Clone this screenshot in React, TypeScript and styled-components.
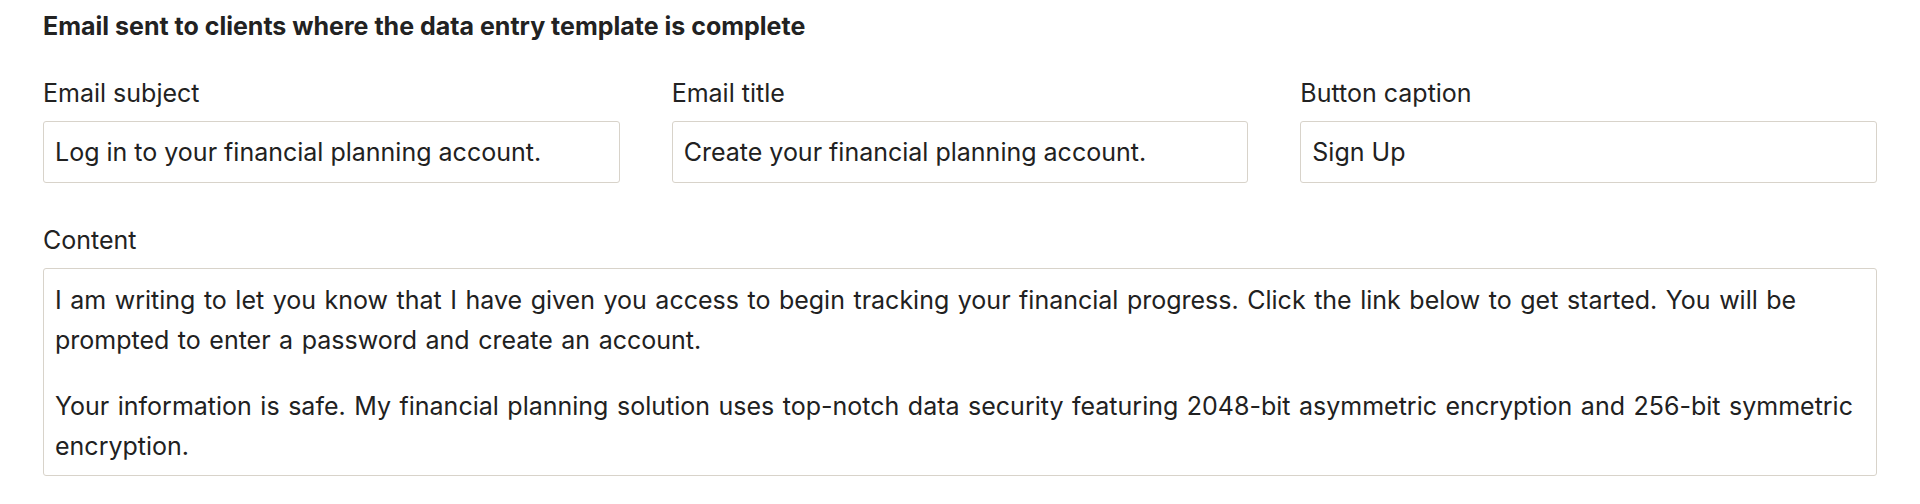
import React from 'react';
import styled, { createGlobalStyle } from 'styled-components';

const GlobalStyle = createGlobalStyle`
  html, body {
    margin: 0;
    padding: 0;
    background: #ffffff;
  }
  body {
    font-family: Inter, "Noto Sans", sans-serif;
    color: #212121;
  }
`;

const Page = styled.div`
  padding: 10px 43px 0 43px;
`;

const Heading = styled.h2`
  margin: 0 0 35px 0;
  font-size: 25px;
  line-height: 32px;
  font-weight: 700;
  color: #222222;
`;

const FieldRow = styled.div`
  display: grid;
  grid-template-columns: repeat(3, 1fr);
  column-gap: 52px;
  margin-bottom: 41px;
`;

const Field = styled.div`
  display: flex;
  flex-direction: column;
  gap: 12px;
`;

const Label = styled.label`
  font-size: 25px;
  line-height: 32px;
  font-weight: 400;
  color: #222222;
`;

const TextInput = styled.input`
  box-sizing: border-box;
  height: 62px;
  width: 100%;
  padding: 0 11px;
  border: 1px solid #d8d3ca;
  border-radius: 3px;
  font-family: inherit;
  font-size: 25px;
  color: #212121;
  background: #ffffff;
  outline: none;
`;

const ContentBox = styled.div`
  box-sizing: border-box;
  border: 1px solid #d8d3ca;
  border-radius: 3px;
  padding: 11px 11px 9px 11px;
`;

const Paragraph = styled.p`
  margin: 0 0 26px 0;
  font-size: 25px;
  line-height: 40px;
  word-spacing: 1.5px;
  color: #212121;

  &:last-child {
    margin-bottom: 0;
  }
`;

const fields = [
  { label: 'Email subject', value: 'Log in to your financial planning account.' },
  { label: 'Email title', value: 'Create your financial planning account.' },
  { label: 'Button caption', value: 'Sign Up' },
];

const App = () => {
  return (
    <>
      <GlobalStyle />
      <Page>
        <Heading>Email sent to clients where the data entry template is complete</Heading>
        <FieldRow>
          {fields.map((f) => (
            <Field key={f.label}>
              <Label>{f.label}</Label>
              <TextInput type="text" defaultValue={f.value} />
            </Field>
          ))}
        </FieldRow>
        <Field>
          <Label>Content</Label>
          <ContentBox>
            <Paragraph>
              I am writing to let you know that I have given you access to begin tracking your financial progress. Click the link below to get started. You will be prompted to enter a password and create an account.
            </Paragraph>
            <Paragraph>
              Your information is safe. My financial planning solution uses top-notch data security featuring 2048-bit asymmetric encryption and 256-bit symmetric encryption.
            </Paragraph>
          </ContentBox>
        </Field>
      </Page>
    </>
  );
};

export default App;
